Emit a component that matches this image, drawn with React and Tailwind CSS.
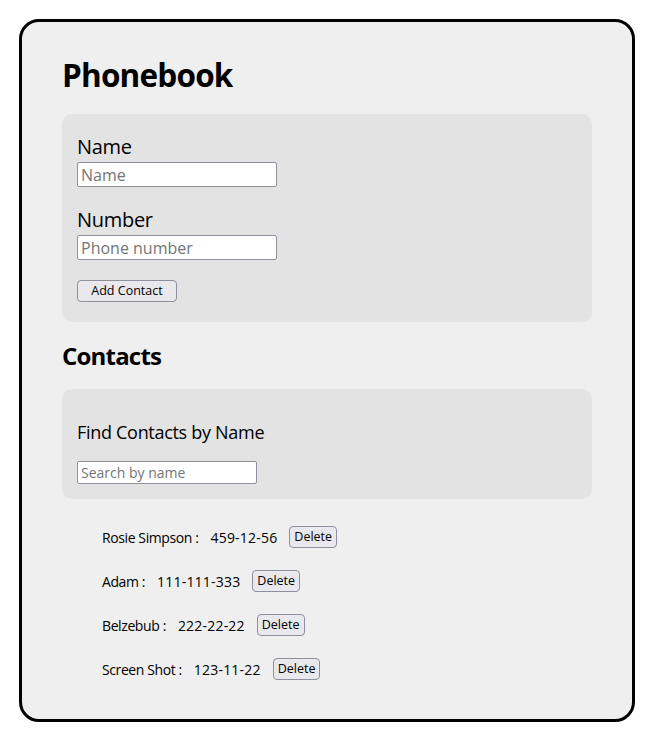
import React, { useState } from 'react';

const initialContacts = [
  { id: 1, name: 'Rosie Simpson', number: '459-12-56' },
  { id: 2, name: 'Adam', number: '111-111-333' },
  { id: 3, name: 'Belzebub', number: '222-22-22' },
  { id: 4, name: 'Screen Shot', number: '123-11-22' },
];

const inputCls =
  'block bg-white border border-[#8f8f9d] rounded-[2px] px-[3px] text-black placeholder:text-[#757575] outline-none';

const btnCls =
  'bg-[#e9e9ed] border border-[#8f8f9d] rounded-[4px] text-black leading-none';

const App = () => {
  const [contacts, setContacts] = useState(initialContacts);
  const [filter, setFilter] = useState('');

  const visible = contacts.filter((c) =>
    c.name.toLowerCase().includes(filter.toLowerCase())
  );

  return (
    <div className="min-h-screen bg-white pt-[19px] pl-[19px] font-['Open_Sans',sans-serif] text-black">
      <div className="w-[616px] h-[703px] border-[3px] border-black rounded-[20px] bg-[#efefef] px-10 pt-[31px]">
        {/* Title */}
        <h1 className="text-[31.5px] font-bold leading-[44px] tracking-[-0.8px]">Phonebook</h1>

        {/* Add form */}
        <form
          className="mt-[17px] bg-[#e3e3e3] rounded-[10px] px-[15px] pt-[20px] pb-[20px]"
          onSubmit={(e) => e.preventDefault()}
        >
          <label className="block text-[20px] leading-[26px] tracking-[-0.3px]">Name</label>
          <input className={`${inputCls} w-[200px] h-[25px] text-[16px] mt-[2px]`} placeholder="Name" />

          <label className="block text-[20px] leading-[26px] tracking-[-0.3px] mt-[20px]">Number</label>
          <input className={`${inputCls} w-[200px] h-[25px] text-[16px] mt-[2px]`} placeholder="Phone number" />

          <button type="submit" className={`${btnCls} block mt-[20px] w-[100px] h-[22px] text-[12.5px]`}>
            Add Contact
          </button>
        </form>

        {/* Contacts */}
        <h2 className="mt-[18px] text-[24px] font-bold leading-[32px] tracking-[-0.8px]">Contacts</h2>

        <div className="mt-[17px] bg-[#e3e3e3] rounded-[10px] px-[15px] pt-[31px] pb-[15px]">
          <p className="text-[18px] leading-[24px] tracking-[-0.3px]">Find Contacts by Name</p>
          <input
            className={`${inputCls} mt-[17px] w-[180px] h-[23px] text-[14px]`}
            placeholder="Search by name"
            value={filter}
            onChange={(e) => setFilter(e.target.value)}
          />
        </div>

        <ul className="mt-[27px] pl-10 flex flex-col gap-[22px]">
          {visible.map((c) => (
            <li key={c.id} className="flex items-center gap-3 h-[22px] text-[14px]">
              <span className="tracking-[-0.4px]">{c.name} :</span>
              <span className="tracking-[0.2px]">{c.number}</span>
              <button
                className={`${btnCls} h-[22px] px-[4px] text-[12.5px]`}
                onClick={() => setContacts(contacts.filter((x) => x.id !== c.id))}
              >
                Delete
              </button>
            </li>
          ))}
        </ul>
      </div>
    </div>
  );
};

export default App;
